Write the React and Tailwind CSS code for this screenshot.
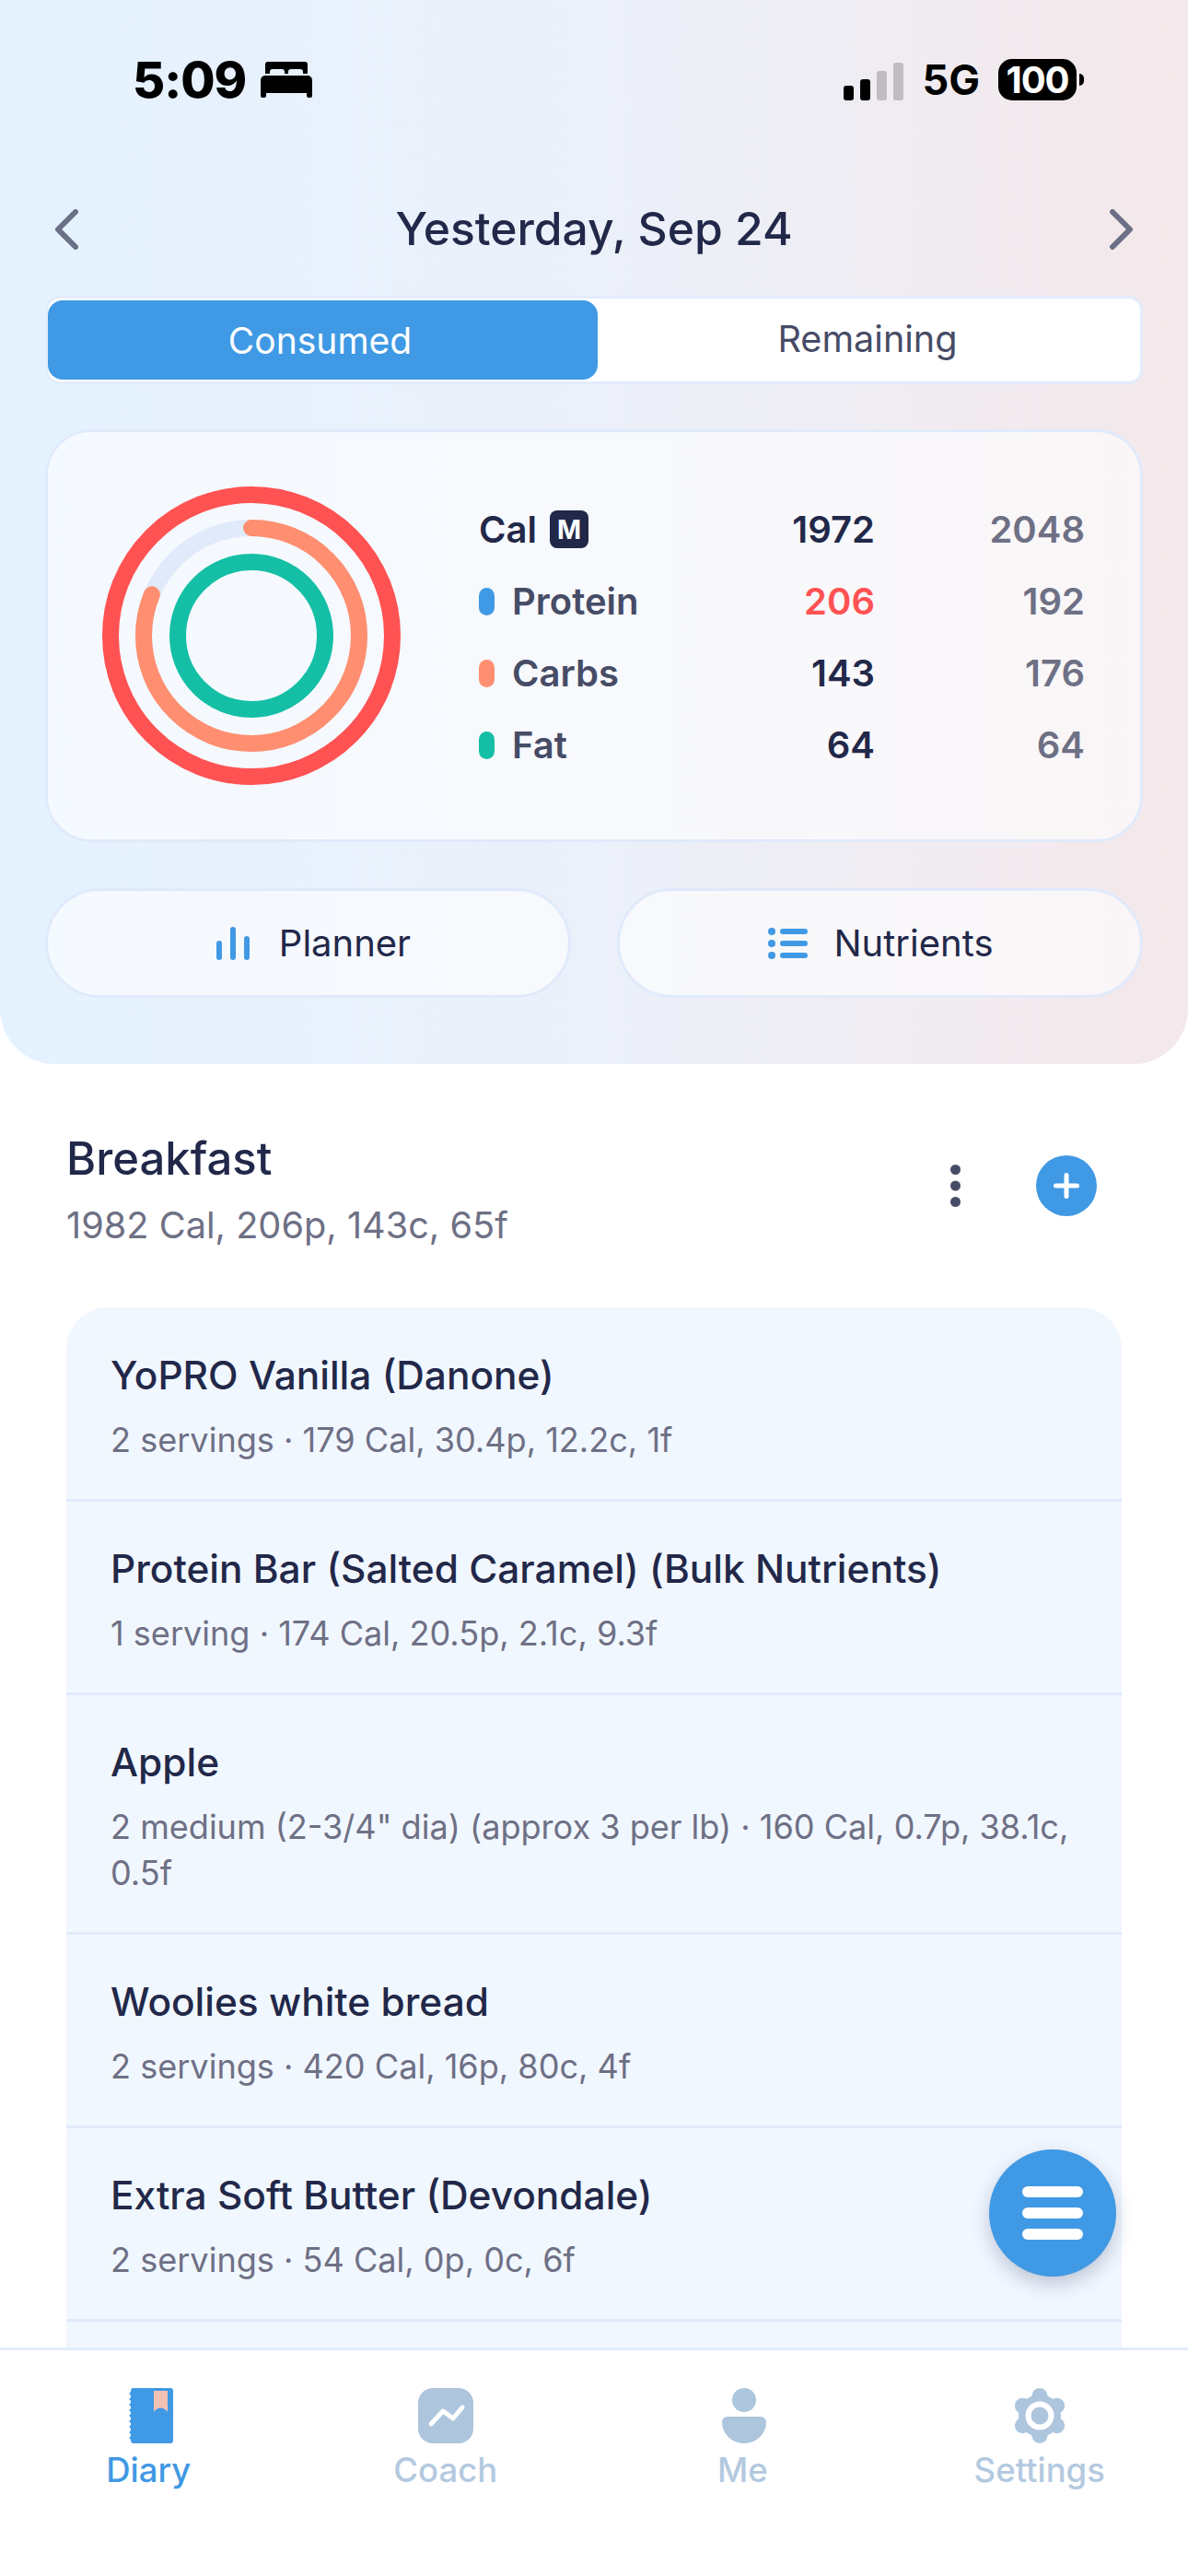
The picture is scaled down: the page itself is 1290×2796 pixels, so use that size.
const macros = [
  { label: 'Protein', dot: 'bg-[#4099e4]', value: '206', goal: '192', valueColor: 'text-[#ff5252]' },
  { label: 'Carbs', dot: 'bg-[#ff8f70]', value: '143', goal: '176', valueColor: 'text-[#222849]' },
  { label: 'Fat', dot: 'bg-[#14bfa6]', value: '64', goal: '64', valueColor: 'text-[#222849]' },
]

const foods = [
  { name: 'YoPRO Vanilla (Danone)', detail: '2 servings · 179 Cal, 30.4p, 12.2c, 1f' },
  { name: 'Protein Bar (Salted Caramel) (Bulk Nutrients)', detail: '1 serving · 174 Cal, 20.5p, 2.1c, 9.3f' },
  { name: 'Apple', detail: '2 medium (2-3/4" dia) (approx 3 per lb) · 160 Cal, 0.7p, 38.1c, 0.5f' },
  { name: 'Woolies white bread', detail: '2 servings · 420 Cal, 16p, 80c, 4f' },
  { name: 'Extra Soft Butter (Devondale)', detail: '2 servings · 54 Cal, 0p, 0c, 6f' },
]

function BedIcon() {
  return (
    <svg width="56" height="39" viewBox="0 0 56 39" fill="#000">
      <path d="M8 0h40a3 3 0 0 1 3 3v10h-5v-2a3 3 0 0 0-3-3h-10a3 3 0 0 0-3 3v2h-4v-2a3 3 0 0 0-3-3h-10a3 3 0 0 0-3 3v2h-5V3a3 3 0 0 1 3-3z" />
      <path d="M5 15h46a5 5 0 0 1 5 5v17a2 2 0 0 1-2 2h-2a2 2 0 0 1-2-2v-3H6v3a2 2 0 0 1-2 2H2a2 2 0 0 1-2-2V20a5 5 0 0 1 5-5z" />
    </svg>
  )
}

function StatusBar() {
  return (
    <div className="flex h-[45px] items-center justify-between pl-[144px] pr-[113px] font-['Inter',sans-serif] text-black">
      <div className="flex items-center gap-[16px]">
        <span className="text-[54px] font-extrabold leading-none tracking-[-1px]">5:09</span>
        <BedIcon />
      </div>
      <div className="flex items-center">
        <div className="flex h-[41px] items-end gap-[7px] self-end">
          <div className="h-[16px] w-[11px] rounded-[3px] bg-black" />
          <div className="h-[23px] w-[11px] rounded-[3px] bg-black" />
          <div className="h-[32px] w-[11px] rounded-[3px] bg-[#bfbcc2]" />
          <div className="h-[41px] w-[11px] rounded-[3px] bg-[#bfbcc2]" />
        </div>
        <span className="ml-[20px] text-[45px] font-bold leading-none">5G</span>
        <div className="ml-[20px] flex h-[45px] w-[85px] items-center justify-center rounded-[15px] bg-black text-[40px] font-bold leading-none tracking-[-1px] text-white">
          100
        </div>
        <div className="ml-[3px] h-[13px] w-[5px] rounded-r-full bg-black" />
      </div>
    </div>
  )
}

function Rings() {
  return (
    <svg width="324" height="324" viewBox="0 0 324 324" fill="none" className="shrink-0">
      <circle cx="162" cy="162" r="153" stroke="#ff5252" strokeWidth="18" />
      <circle cx="162" cy="162" r="117" stroke="#e0eafb" strokeWidth="18" />
      <circle
        cx="162"
        cy="162"
        r="117"
        stroke="#ff8f70"
        strokeWidth="18"
        strokeLinecap="round"
        strokeDasharray="597 735"
        transform="rotate(-90 162 162)"
      />
      <circle cx="162" cy="162" r="80" stroke="#14bfa6" strokeWidth="18" />
    </svg>
  )
}

function DiaryIcon() {
  return (
    <svg width="48" height="60" viewBox="0 0 48 60" className="ml-[6px]">
      <rect x="2" y="0" width="46" height="60" rx="3" fill="#4099e4" />
      {[6, 12, 18, 24, 30, 36, 42, 48, 54].map((y) => (
        <circle key={y} cx="2" cy={y} r="1.6" fill="#4099e4" />
      ))}
      <path d="M27 3h15v23c-2-3-5-4.500-7.500-4.500S29 23 27 26z" fill="#f1c1b3" />
    </svg>
  )
}

function CoachIcon() {
  return (
    <svg width="60" height="60" viewBox="0 0 60 60" fill="none">
      <rect width="60" height="60" rx="16" fill="#adc5dd" />
      <path d="M14 39l13-14 11 8 10-12" stroke="#fff" strokeWidth="5" strokeLinecap="round" strokeLinejoin="round" />
    </svg>
  )
}

function MeIcon() {
  return (
    <svg width="48" height="60" viewBox="0 0 48 60" fill="#adc5dd" className="ml-[3px]">
      <circle cx="24" cy="13" r="13" />
      <path d="M6 31h36a6 6 0 0 1 6 6c0 13-11 23-24 23S0 50 0 37a6 6 0 0 1 6-6z" />
    </svg>
  )
}

function SettingsIcon() {
  const lobes = [0, 60, 120, 180, 240, 300]
  return (
    <svg width="58" height="60" viewBox="0 0 58 60" fill="#adc5dd">
      <circle cx="29" cy="30" r="23" />
      {lobes.map((deg) => (
        <circle
          key={deg}
          cx={29 + 21.5 * Math.sin((deg * Math.PI) / 180)}
          cy={30 - 21.5 * Math.cos((deg * Math.PI) / 180)}
          r="8.500"
        />
      ))}
      <circle cx="29" cy="30" r="12.500" fill="none" stroke="#fff" strokeWidth="6" />
    </svg>
  )
}

const tabs = [
  { label: 'Diary', icon: <DiaryIcon />, color: 'text-[#4099e4]' },
  { label: 'Coach', icon: <CoachIcon />, color: 'text-[#b3c9df]' },
  { label: 'Me', icon: <MeIcon />, color: 'text-[#b3c9df]' },
  { label: 'Settings', icon: <SettingsIcon />, color: 'text-[#b3c9df]' },
]

export default function App() {
  return (
    <div className="relative flex h-[2796px] w-[1290px] flex-col overflow-hidden bg-white font-['Inter',sans-serif] text-[#222849]">
      <header className="h-[1155px] shrink-0 rounded-b-[60px] bg-linear-to-r from-[#e4f2ff] via-[#ebf0fa] to-[#f4e8ea] pt-[64px]">
        <StatusBar />

        <div className="px-[49px]">
          <div className="mt-[116px] flex h-[48px] items-center justify-between px-[10px]">
            <svg width="26" height="44" viewBox="0 0 26 44" fill="none" stroke="#6b7086" strokeWidth="6" strokeLinecap="round" strokeLinejoin="round">
              <path d="M23 3L4 22l19 19" />
            </svg>
            <h1 className="text-[49.800px] font-medium leading-none">Yesterday, Sep 24</h1>
            <svg width="26" height="44" viewBox="0 0 26 44" fill="none" stroke="#6b7086" strokeWidth="6" strokeLinecap="round" strokeLinejoin="round">
              <path d="M3 3l19 19L3 41" />
            </svg>
          </div>

          <div className="mt-[48px] flex h-[96px] overflow-hidden rounded-[16px] border-[3px] border-[#e3ecfb] bg-white py-[2px] leading-none">
            <div className="flex w-[597px] items-center justify-center rounded-[16px] bg-[#4099e4] pr-[6px] text-[39px] text-white">Consumed</div>
            <div className="flex flex-1 items-center justify-center pr-[3px] text-[39.600px] text-[#474c66]">Remaining</div>
          </div>

          <section className="mt-[49px] flex h-[448px] items-center gap-[85px] rounded-[50px] border-[3px] border-[#e0eafb] bg-white/60 pl-[59px] pr-[60px]">
            <Rings />
            <div className="mt-[3px] flex-1 text-[40px] font-semibold leading-none">
              <div className="grid h-[78px] grid-cols-[1fr_120px_228px] items-center">
                <div className="flex items-center gap-[14px]">
                  Cal
                  <span className="flex h-[41px] w-[42px] items-center justify-center rounded-[8px] bg-[#222849] text-[28px] font-bold text-white">M</span>
                </div>
                <span className="text-right">1972</span>
                <span className="text-right text-[#6e7085]">2048</span>
              </div>
              {macros.map((m) => (
                <div key={m.label} className="grid h-[78px] grid-cols-[1fr_120px_228px] items-center">
                  <div className="flex items-center gap-[19px] text-[#474c66]">
                    <span className={`h-[30px] w-[17px] rounded-full ${m.dot}`} />
                    {m.label}
                  </div>
                  <span className={`text-right ${m.valueColor}`}>{m.value}</span>
                  <span className="text-right text-[#6e7085]">{m.goal}</span>
                </div>
              ))}
            </div>
          </section>

          <div className="mt-[50px] grid grid-cols-2 gap-[50px] text-[40px] leading-none">
            <button className="flex h-[119px] items-center justify-center gap-[30px] rounded-full border-[3px] border-[#e0eafb] bg-white/60 pl-[10px]">
              <svg width="40" height="40" viewBox="0 0 40 40" fill="#4099e4">
                <rect x="2" y="17" width="6" height="21" rx="3" />
                <rect x="17" y="2" width="6" height="36" rx="3" />
                <rect x="32" y="12" width="6" height="26" rx="3" />
              </svg>
              Planner
            </button>
            <button className="flex h-[119px] items-center justify-center gap-[28px] rounded-full border-[3px] border-[#e0eafb] bg-white/60 pl-[2px]">
              <svg width="43" height="34" viewBox="0 0 43 34" fill="#4099e4">
                <circle cx="4" cy="4" r="4" />
                <circle cx="4" cy="17" r="4" />
                <circle cx="4" cy="30" r="4" />
                <rect x="13" y="1" width="30" height="6" rx="3" />
                <rect x="13" y="14" width="30" height="6" rx="3" />
                <rect x="13" y="27" width="30" height="6" rx="3" />
              </svg>
              Nutrients
            </button>
          </div>
        </div>
      </header>

      <main className="min-h-0 flex-1 overflow-hidden px-[72px]">
        <div className="mb-[63px] flex items-start justify-between pt-[75px]">
          <div>
            <h2 className="text-[49px] font-medium leading-[56px]">Breakfast</h2>
            <p className="mt-[18px] text-[39.700px] leading-[52px] text-[#6e7085]">1982 Cal, 206p, 143c, 65f</p>
          </div>
          <div className="mr-[27px] mt-[24px] flex items-center gap-[82px]">
            <svg width="11" height="46" viewBox="0 0 11 46" fill="#474c66">
              <circle cx="5.500" cy="5.500" r="5.500" />
              <circle cx="5.500" cy="23" r="5.500" />
              <circle cx="5.500" cy="40.500" r="5.500" />
            </svg>
            <div className="flex h-[66px] w-[66px] items-center justify-center rounded-full bg-[#4099e4]">
              <svg width="30" height="30" viewBox="0 0 30 30" fill="none" stroke="#fff" strokeWidth="5" strokeLinecap="round">
                <path d="M15 3.500v23M3.500 15h23" />
              </svg>
            </div>
          </div>
        </div>

        <div className="rounded-t-[45px] bg-[#f1f7ff] pt-[1px]">
          {foods.map((food) => (
            <div key={food.name} className="border-b-[3px] border-[#e0eafb] pb-[39px] pl-[48px] pr-[50px] pt-[45px]">
              <div className="text-[42.400px] font-medium leading-[56px]">{food.name}</div>
              <div className="mt-[17px] text-[36.100px] leading-[50px] text-[#6e7085]">{food.detail}</div>
            </div>
          ))}
          <div className="h-[100px]" />
        </div>
      </main>

      <nav className="relative grid h-[248px] shrink-0 grid-cols-4 border-t-[3px] border-[#e3ecfb] bg-white pt-[41px]">
        {tabs.map((tab) => (
          <div key={tab.label} className={`flex flex-col items-center ${tab.color}`}>
            <div className="flex h-[60px] items-center justify-center">{tab.icon}</div>
            <span className="mt-[7px] text-[36.500px] font-medium leading-[44px]">{tab.label}</span>
          </div>
        ))}
      </nav>

      <button className="absolute left-[1074px] top-[2333px] flex h-[138px] w-[138px] flex-col items-center justify-center gap-[11px] rounded-full bg-[#4099e4] shadow-[0_8px_20px_rgba(30,50,90,0.25)]">
        <span className="h-[12px] w-[66px] rounded-full bg-white" />
        <span className="h-[12px] w-[66px] rounded-full bg-white" />
        <span className="h-[12px] w-[66px] rounded-full bg-white" />
      </button>
    </div>
  )
}
